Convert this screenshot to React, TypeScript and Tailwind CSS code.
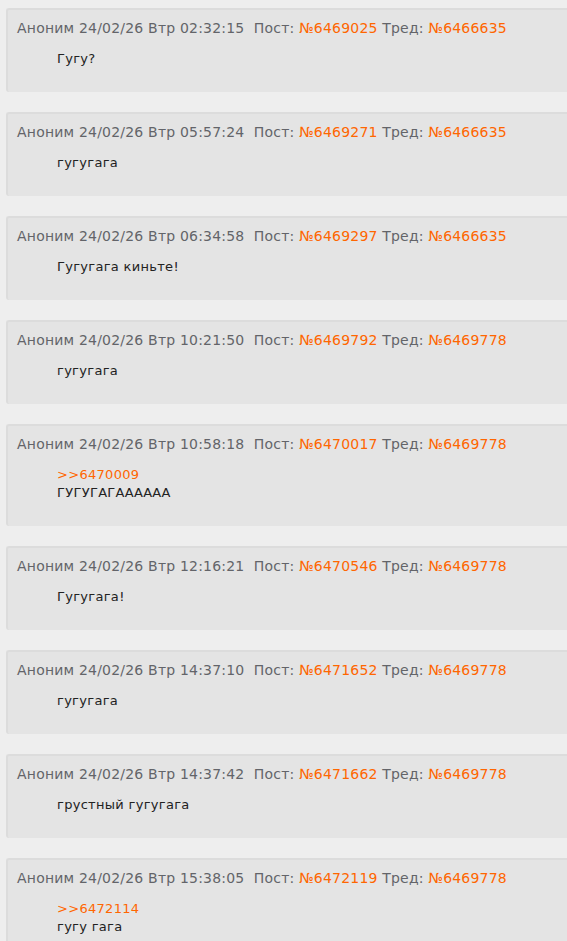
const posts = [
  { time: '02:32:15', post: '6469025', thread: '6466635', text: 'Гугу?' },
  { time: '05:57:24', post: '6469271', thread: '6466635', text: 'гугугага' },
  { time: '06:34:58', post: '6469297', thread: '6466635', text: 'Гугугага киньте!' },
  { time: '10:21:50', post: '6469792', thread: '6469778', text: 'гугугага' },
  { time: '10:58:18', post: '6470017', thread: '6469778', reply: '6470009', text: 'ГУГУГАГАААААА' },
  { time: '12:16:21', post: '6470546', thread: '6469778', text: 'Гугугага!' },
  { time: '14:37:10', post: '6471652', thread: '6469778', text: 'гугугага' },
  { time: '14:37:42', post: '6471662', thread: '6469778', text: 'грустный гугугага' },
  { time: '15:38:05', post: '6472119', thread: '6469778', reply: '6472114', text: 'гугу гага' },
]

export default function App() {
  return (
    <div className="min-h-[941px] bg-[#eeeeee] pt-2 pl-[6px] font-['DejaVu_Sans',Verdana,sans-serif] leading-[18px]">
      {posts.map((p) => (
        <div
          key={p.post}
          className="mb-5 rounded-l-[3px] border-t-2 border-l-2 border-[#dcdcdc] bg-[#e4e4e4] pl-[9px] pt-[9px] pb-[24px]"
        >
          <div className="whitespace-pre text-[14px] tracking-[0.2px] text-[#636469]">
            {'Аноним 24/02/26 Втр ' + p.time + '  Пост: '}
            <span className="text-[#ff6600]">№{p.post}</span>
            {' Тред: '}
            <span className="text-[#ff6600]">№{p.thread}</span>
          </div>
          <div className="mt-[13px] pl-10 text-[13px] tracking-[0.3px] text-[#222222]">
            {p.reply && <div className="text-[#ff6600]">&gt;&gt;{p.reply}</div>}
            <div>{p.text}</div>
          </div>
        </div>
      ))}
    </div>
  )
}
